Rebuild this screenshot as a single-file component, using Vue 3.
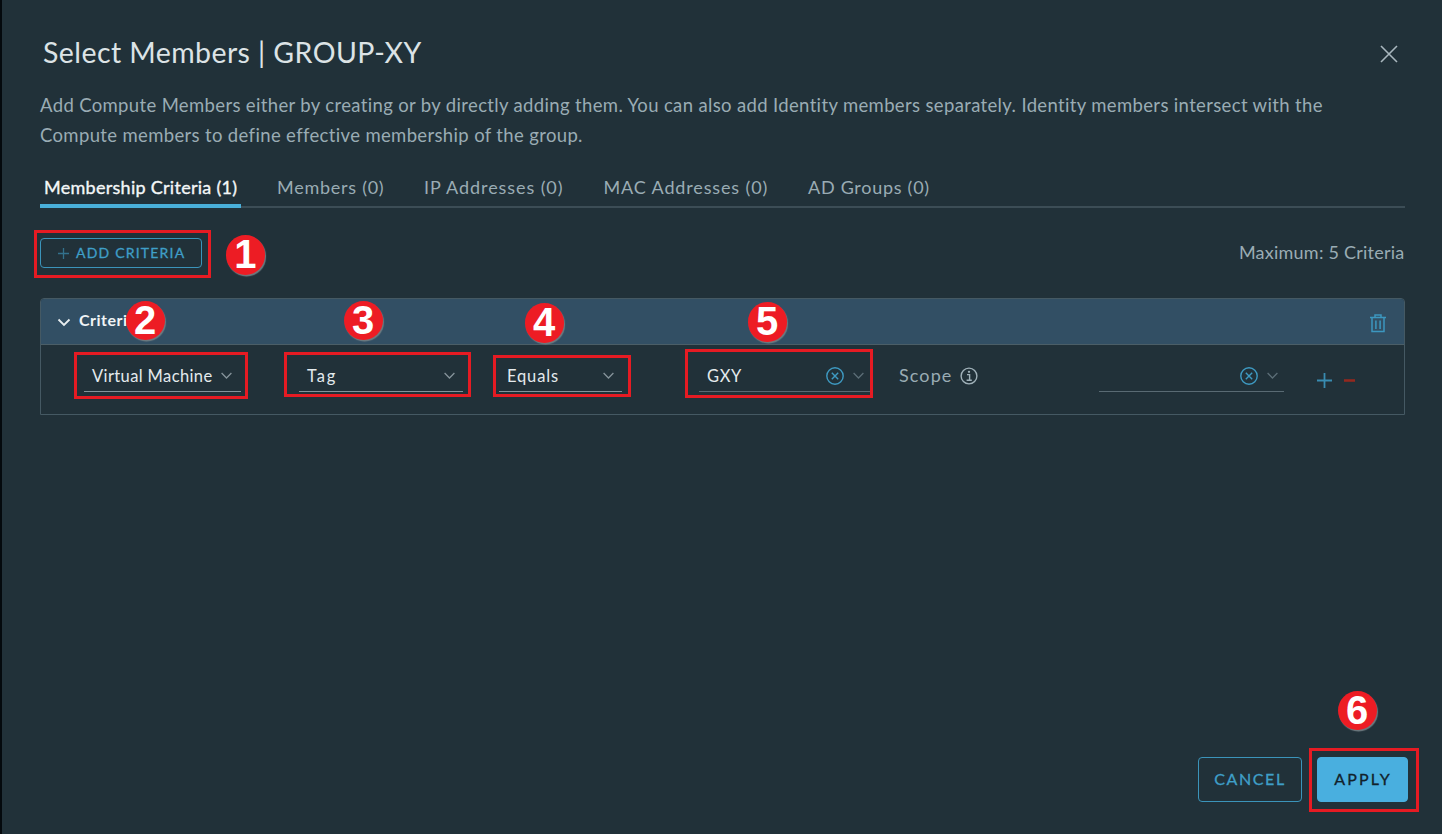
<script setup>
const tabs = ['Membership Criteria (1)', 'Members (0)', 'IP Addresses (0)', 'MAC Addresses (0)', 'AD Groups (0)']

const fields = [
  { key: 'type', value: 'Virtual Machine' },
  { key: 'property', value: 'Tag' },
  { key: 'operator', value: 'Equals' },
  { key: 'value', value: 'GXY', clearable: true },
]

const steps = [
  { n: 1, cx: 245.3, cy: 255, x: 34, y: 230, w: 177, h: 48 },
  { n: 2, cx: 145.2, cy: 320.4, x: 74, y: 352, w: 174, h: 47 },
  { n: 3, cx: 363.2, cy: 320.4, x: 284, y: 352, w: 187, h: 45 },
  { n: 4, cx: 544.2, cy: 323, x: 493, y: 355, w: 138, h: 42 },
  { n: 5, cx: 767.2, cy: 322, x: 685, y: 349, w: 188, h: 49 },
  { n: 6, cx: 1357.2, cy: 710.4, x: 1309, y: 748, w: 110, h: 64 },
]
</script>

<template>
  <div class="page">
    <section class="dialog">
      <header class="head">
        <h1>Select Members | GROUP-XY</h1>
        <svg class="close" width="18" height="18" viewBox="0 0 18 18"><path d="M1 1L17 17M17 1L1 17" /></svg>
      </header>

      <p class="intro">
        Add Compute Members either by creating or by directly adding them. You can also add Identity members separately. Identity members intersect with the<br />
        Compute members to define effective membership of the group.
      </p>

      <nav class="tabs">
        <span v-for="(t, i) in tabs" :key="t" class="tab" :class="['tab' + i, { active: i === 0 }]">{{ t }}</span>
      </nav>

      <div class="toolbar">
        <button class="btn add">
          <svg width="11" height="11" viewBox="0 0 11 11"><path d="M5.5 0V11M0 5.5H11" /></svg>
          <span>ADD CRITERIA</span>
        </button>
        <span class="max">Maximum: 5 Criteria</span>
      </div>

      <div class="panel">
        <div class="panel-head">
          <svg class="caret" width="14" height="9" viewBox="0 0 14 9"><path d="M1.5 1.5L7 7L12.5 1.5" /></svg>
          <span class="panel-title">Criteria</span>
          <svg class="trash" width="16" height="19" viewBox="0 0 16 19">
            <path d="M0 3.6H16M5 3V1H11V3M2 4V17.4H14V4M5.9 6.5V15M10.1 6.5V15" />
          </svg>
        </div>
        <div class="row">
          <div v-for="f in fields" :key="f.key" class="field" :class="f.key">
            <span class="val">{{ f.value }}</span>
            <svg v-if="f.clearable" class="clear" width="18" height="18" viewBox="0 0 18 18"><circle cx="9" cy="9" r="8.2" /><path d="M5.8 5.8L12.2 12.2M12.2 5.8L5.8 12.2" /></svg>
            <svg class="chev" width="11" height="8" viewBox="0 0 11 8"><path d="M.6 1L5.5 6L10.4 1" /></svg>
          </div>
          <div class="scope">
            <span>Scope</span>
            <svg width="18" height="18" viewBox="0 0 18 18"><circle cx="9" cy="9" r="7.9" /><path d="M7 7.6H9.6V13M6.6 13.2H11.8" /><circle class="dot" cx="9" cy="4.8" r="1.15" /></svg>
          </div>
          <div class="field scope-value">
            <svg class="clear" width="18" height="18" viewBox="0 0 18 18"><circle cx="9" cy="9" r="8.2" /><path d="M5.8 5.8L12.2 12.2M12.2 5.8L5.8 12.2" /></svg>
            <svg class="chev" width="11" height="8" viewBox="0 0 11 8"><path d="M.6 1L5.5 6L10.4 1" /></svg>
          </div>
          <div class="row-actions">
            <svg class="plus" width="15" height="15" viewBox="0 0 15 15"><path d="M7.5 0V15M0 7.5H15" /></svg>
            <svg class="minus" width="11" height="3" viewBox="0 0 11 3"><path d="M0 1.5H11" /></svg>
          </div>
        </div>
      </div>

      <footer class="foot">
        <button class="btn cancel">CANCEL</button>
        <button class="btn apply">APPLY</button>
      </footer>
    </section>

    <template v-for="s in steps" :key="s.n">
      <div class="mark" :style="{ left: s.x + 'px', top: s.y + 'px', width: s.w + 'px', height: s.h + 'px' }"></div>
      <div class="badge" :style="{ left: s.cx - 19.7 + 'px', top: s.cy - 19.7 + 'px' }"><span>{{ s.n }}</span></div>
    </template>
  </div>
</template>

<style>
body { margin: 0; overflow: hidden; background: #04090d; }
</style>

<style scoped>
.page {
  position: relative;
  width: 1442px;
  height: 834px;
  padding-left: 2px;
  box-sizing: border-box;
  overflow: hidden;
  background: #04090d;
  font-family: Lato, "Open Sans", sans-serif;
  color: #9aacb4;
}
.dialog {
  height: 834px;
  box-sizing: border-box;
  padding: 35px 37.5px 32px 38px;
  background: #213139;
  display: flex;
  flex-direction: column;
}
svg { display: block; fill: none; flex: none; }
.head { display: flex; justify-content: space-between; align-items: center; height: 34px; padding: 0 6.5px 0 3px; }
h1 { margin: 0; font-size: 28.5px; line-height: 34px; font-weight: 400; letter-spacing: 0.42px; color: #dce3e6; white-space: nowrap; }
.close { stroke: #a9b7be; stroke-width: 1.6; margin-top: 4px; }
.intro { margin: 21px 0 0; font-size: 18.5px; line-height: 30px; letter-spacing: 0.35px; white-space: nowrap; }
.tabs { margin-top: 19px; height: 39px; box-sizing: border-box; display: flex; border-bottom: 2px solid #3c4d56; font-size: 18px; white-space: nowrap; }
.tab { height: 39px; box-sizing: border-box; line-height: 37px; }
.tab0 { width: 201px; padding-left: 4px; letter-spacing: 0.28px; }
.tab1 { width: 183px; padding-left: 36px; letter-spacing: 0.74px; }
.tab2 { width: 179.5px; letter-spacing: 0.92px; }
.tab3 { width: 204.5px; letter-spacing: 0.86px; }
.tab4 { letter-spacing: 0.72px; }
.tab.active { color: #f4f7f8; border-bottom: 4px solid #49afd9; -webkit-text-stroke: 0.35px #f4f7f8; }
.toolbar { display: flex; justify-content: space-between; align-items: center; height: 30px; margin-top: 30px; font-size: 18px; }
.max { letter-spacing: 0.24px; margin-top: -3px; }
.btn { box-sizing: border-box; margin: 0; background: none; font-family: inherit; color: #3f9fc8; border: 1.5px solid #3b94ba; border-radius: 4px; white-space: nowrap; }
.add { width: 162px; height: 30px; padding: 0 0 0 17px; display: flex; align-items: center; gap: 7px; font-size: 14px; letter-spacing: 1.2px; -webkit-text-stroke: 0.3px #3f9fc8; }
.add svg { stroke: #33718c; stroke-width: 1.3; }
.add span { margin-top: -1px; }
.panel { margin-top: 30px; border: 1px solid #455963; border-radius: 4px 4px 0 0; height: 117px; box-sizing: border-box; }
.panel-head { height: 46px; box-sizing: border-box; border-bottom: 1px solid #4b5e67; background: #324f64; border-radius: 3px 3px 0 0; display: flex; align-items: center; padding: 0 17.5px 0 16px; }
.caret { stroke: #e9eef0; stroke-width: 1.8; margin-top: 2px; }
.panel-title { margin: -4px 0 0 8px; font-size: 16px; letter-spacing: 0.5px; font-weight: 700; color: #f0f4f6; }
.trash { margin: 3px 0 0 auto; stroke: #3c97bf; stroke-width: 1.5; }
.row { display: flex; align-items: flex-start; padding: 16px 0 0 43px; }
.field { height: 31px; box-sizing: border-box; border-bottom: 1.5px solid #84939b; display: flex; align-items: center; padding-left: 8px; color: #e4eaed; font-size: 16.5px; white-space: nowrap; }
.type { width: 157px; padding-right: 9px; letter-spacing: 0.38px; }
.property { width: 164px; margin-left: 58px; padding-right: 8px; letter-spacing: 1.9px; }
.operator { width: 123px; margin-left: 36px; padding-right: 8px; letter-spacing: 0.85px; }
.value { width: 171px; margin-left: 77px; padding-right: 6px; border-color: #596a73; letter-spacing: 0.6px; }
.scope-value { width: 185px; margin-left: 121px; padding-right: 6px; border-color: #596a73; justify-content: flex-end; }
.val { margin: -1px auto 0 0; }
.chev { stroke: #85939a; stroke-width: 1.3; margin-top: -1px; }
.value .chev, .scope-value .chev { stroke: #5b6d76; }
.clear { stroke: #3e9ac2; stroke-width: 1.4; margin-right: 9px; }
.scope { width: 79px; height: 31px; margin-left: 29px; display: flex; align-items: center; justify-content: space-between; font-size: 18px; letter-spacing: 1.1px; }
.scope span { margin-top: -4px; }
.scope svg { stroke: #a0b1b9; stroke-width: 1.4; margin-top: -1px; }
.scope .dot { fill: #a0b1b9; stroke: none; }
.row-actions { display: flex; align-items: center; gap: 12px; margin: 12px 0 0 33px; }
.plus { stroke: #398cb1; stroke-width: 1.8; }
.minus { stroke: #93291f; stroke-width: 2.6; }
.foot { display: flex; justify-content: flex-end; gap: 15px; margin-top: auto; margin-right: -3.5px; }
.foot .btn { height: 45px; padding: 0 0 2px; font-size: 16px; letter-spacing: 1.6px; -webkit-text-stroke: 0.3px; }
.cancel { width: 104px; }
.foot .apply { width: 91px; padding-left: 1px; background: #49afdf; border-color: #49afdf; color: #12222b; letter-spacing: 2.2px; }
.mark { position: absolute; box-sizing: border-box; border: 3px solid #e61b23; }
.badge { position: absolute; width: 39.4px; height: 39.4px; border-radius: 50%; background: #ed1c24; box-shadow: 1px 1.5px 1px #6f7b80; display: flex; justify-content: center; color: #fff; font: 700 40px/38px "Liberation Sans", Arial, sans-serif; }
</style>
